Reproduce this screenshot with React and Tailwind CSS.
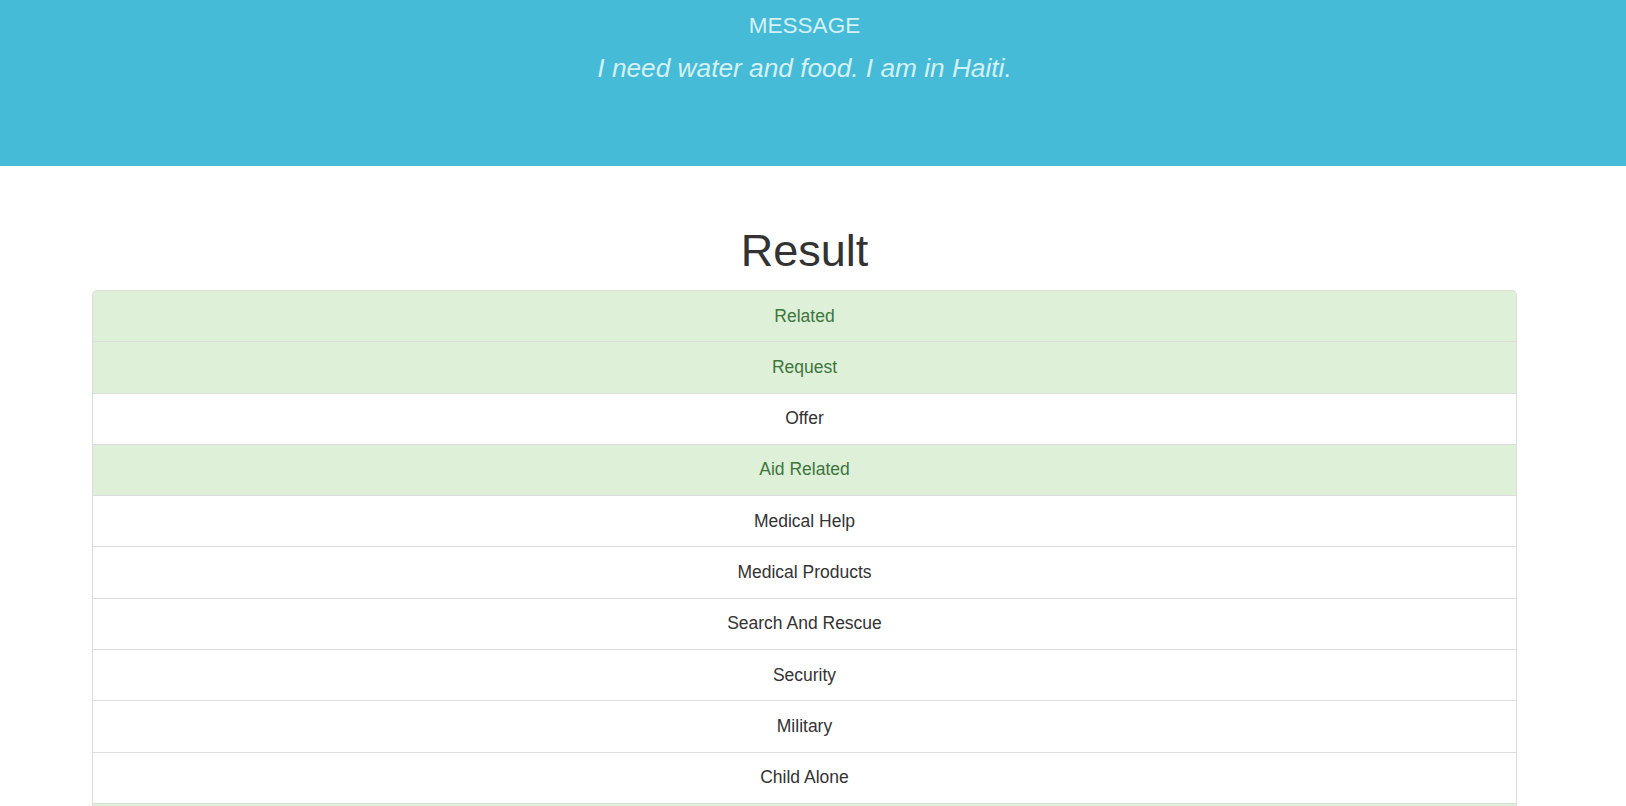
const categories = [
  { name: "Related", hit: true },
  { name: "Request", hit: true },
  { name: "Offer", hit: false },
  { name: "Aid Related", hit: true },
  { name: "Medical Help", hit: false },
  { name: "Medical Products", hit: false },
  { name: "Search And Rescue", hit: false },
  { name: "Security", hit: false },
  { name: "Military", hit: false },
  { name: "Child Alone", hit: false },
  { name: "Water", hit: true },
  { name: "Food", hit: true },
  { name: "Shelter", hit: false },
  { name: "Clothing", hit: false },
];

function ResultRow({ name, hit, first }) {
  return (
    <li
      className={
        "-mb-px border border-[#ddd] px-[19px] py-[12.65px] text-center leading-[25px] " +
        (first ? "rounded-t-[5px] " : "") +
        (hit ? "bg-[#dff0d8] text-[#3c763d]" : "bg-white text-[#333]")
      }
    >
      {name}
    </li>
  );
}

export default function App() {
  return (
    <div className="min-h-screen bg-white font-['Liberation_Sans',Arial,sans-serif]">
      <header className="h-[166px] w-full bg-[#46bbd7] pr-[17px] pt-[13px] text-center text-[#d4f1f5]">
        <h4 className="text-[22.5px] leading-[25px]">MESSAGE</h4>
        <p className="mt-[15px] text-[26.25px] italic leading-[30px]">
          I need water and food. I am in Haiti.
        </p>
      </header>

      <main className="w-[1609px]">
        <div className="mx-auto w-[1425px] pt-[60px]">
          <h1 className="text-center text-[45px] leading-[50px] text-[#333]">Result</h1>
          <ul className="mt-[14px] text-[17.5px]">
            {categories.map((c, i) => (
              <ResultRow key={c.name} name={c.name} hit={c.hit} first={i === 0} />
            ))}
          </ul>
        </div>
      </main>
    </div>
  );
}
